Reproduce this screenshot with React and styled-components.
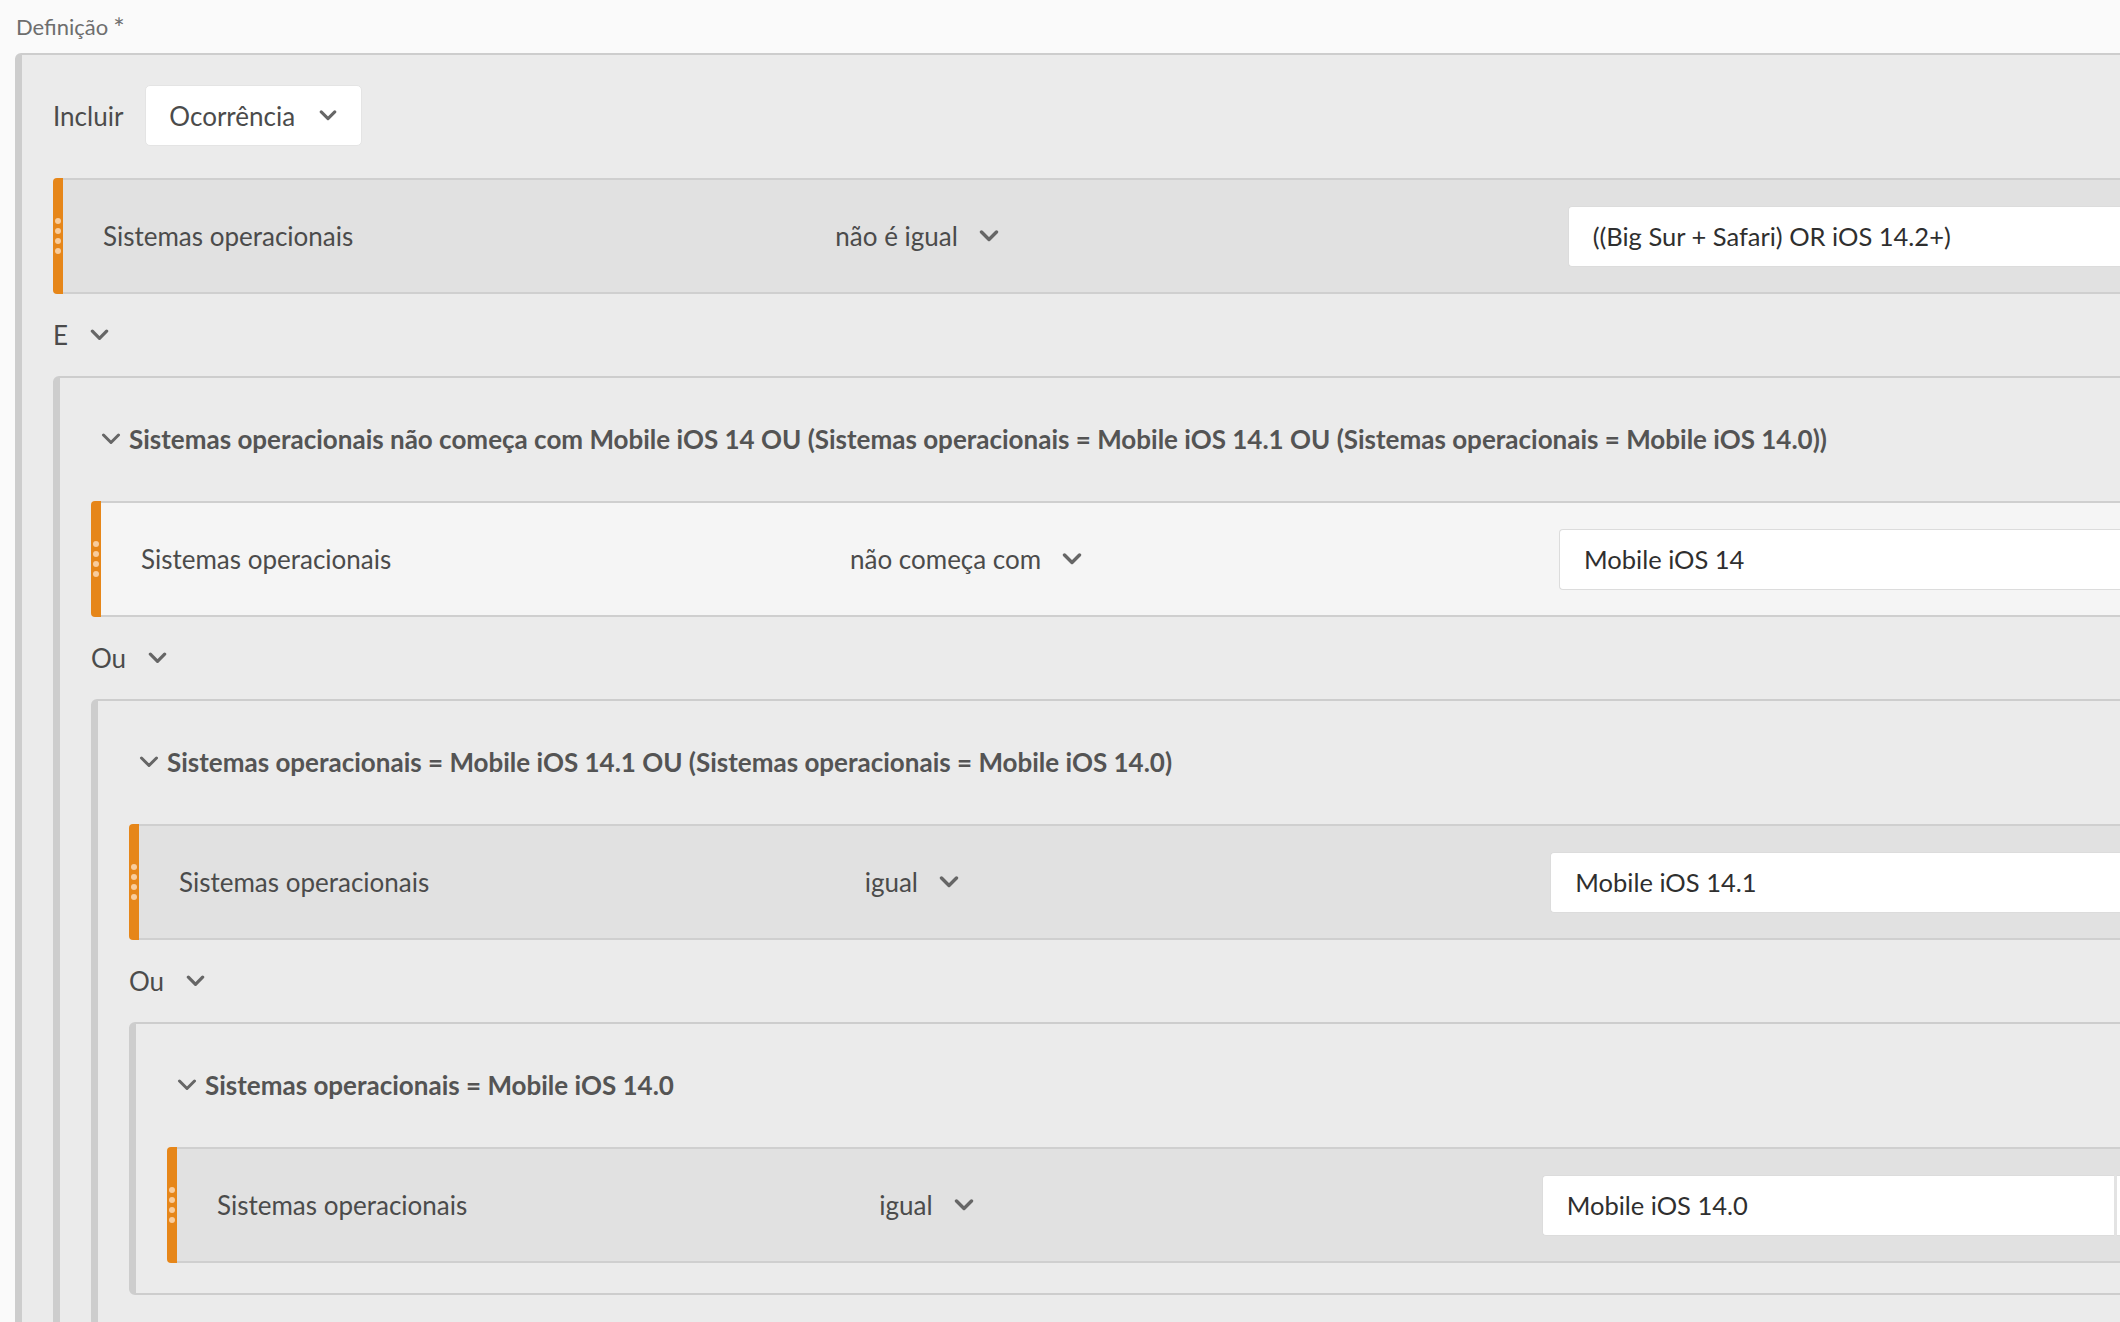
import React from "react"
import styled, { createGlobalStyle } from "styled-components"

const GlobalStyle = createGlobalStyle`
  html, body {
    margin: 0;
    overflow: hidden;
    background: #fafafa;
  }
  body {
    font-family: Lato, "Noto Sans", sans-serif;
    color: #4b4b4b;
  }
`

const Page = styled.div`
  width: max-content;
  padding: 12px 0 0 15px;
`

const FieldLabel = styled.div`
  height: 30px;
  font-size: 22px;
  line-height: 30px;
  color: #6e6e6e;
  margin: 0 0 11px 1px;
`

const Required = styled.span`
  font-size: 27px;
  line-height: 0;
  margin-left: 5px;
  vertical-align: -3px;
`

const Group = styled.div`
  box-sizing: border-box;
  width: ${p => p.$width || "auto"};
  background: #ebebeb;
  border: 2px solid #cdcdcd;
  border-left-width: 7px;
  border-radius: 6px;
  padding: 30px 30px 30px 31px;
`

const HeaderLine = styled.div`
  display: flex;
  align-items: center;
  height: 61px;
  margin-bottom: 32px;
`

const IncludeLabel = styled.span`
  font-size: 26px;
  margin-right: 22px;
`

const Dropdown = styled.div`
  box-sizing: border-box;
  display: flex;
  align-items: center;
  gap: 24px;
  height: 61px;
  padding: 0 24px 0 23px;
  background: #fff;
  border: 1px solid #e4e4e4;
  border-radius: 5px;
  font-size: 26px;
  color: #4b4b4b;
`

const GroupTitle = styled.span`
  font-size: 26px;
  font-weight: 700;
  color: #545454;
  white-space: nowrap;
  margin-left: 8px;
`

const Toggle = styled.span`
  display: flex;
  margin-left: 10px;
`

const Rule = styled.div`
  display: flex;
  height: 116px;
`

const Grip = styled.div`
  width: 10px;
  flex: none;
  background: #e68619;
  border-radius: 4px 0 0 4px;
  display: flex;
  flex-direction: column;
  align-items: center;
  justify-content: center;
  gap: 4px;
`

const Dot = styled.span`
  width: 6px;
  height: 6px;
  border-radius: 50%;
  background: #f8cc9c;
`

const RuleBody = styled.div`
  box-sizing: border-box;
  flex: 1;
  display: grid;
  grid-template-columns: 1fr 1fr 1fr 200px;
  align-items: center;
  padding-left: 40px;
  background: ${p => (p.$light ? "#f5f5f5" : "#e1e1e1")};
  border: 2px solid #cfcfcf;
  border-left: none;
  border-radius: 0 4px 4px 0;
`

const FieldName = styled.span`
  font-size: 26px;
  color: #4b4b4b;
`

const Operator = styled.div`
  display: flex;
  align-items: center;
  gap: 21px;
  font-size: 26px;
  color: #4b4b4b;
`

const Combo = styled.div`
  display: flex;
  height: 61px;
`

const ValueInput = styled.div`
  box-sizing: border-box;
  flex: 1;
  display: flex;
  align-items: center;
  padding-left: 24px;
  background: #fff;
  border: 1px solid #dcdcdc;
  border-right: none;
  border-radius: 4px 0 0 4px;
  font-size: 25.5px;
  color: #2f2f2f;
`

const ComboButton = styled.div`
  box-sizing: border-box;
  width: 90px;
  background: #fff;
  border: 1px solid #dcdcdc;
  border-left: 3px solid #e3e3e3;
  border-radius: 0 4px 4px 0;
`

const Connector = styled.div`
  display: flex;
  align-items: center;
  gap: 22px;
  height: 82px;
  font-size: 26px;
  color: #4b4b4b;
`

const ChevronSvg = styled.svg`
  display: block;
  fill: none;
  stroke: #666;
  stroke-width: ${p => p.$weight || 3.4};
  stroke-linecap: round;
  stroke-linejoin: round;
`

const Chevron = ({ width = 20, weight }) => (
  <ChevronSvg width={width} height={Math.round(width * 0.62)} viewBox="0 0 20 12" $weight={weight}>
    <polyline points="2.5,2 10,9.5 17.5,2" />
  </ChevronSvg>
)

const tree = {
  rule: { field: "Sistemas operacionais", op: "não é igual", value: "((Big Sur + Safari) OR iOS 14.2+)" },
  connector: "E",
  child: {
    title: "Sistemas operacionais não começa com Mobile iOS 14 OU (Sistemas operacionais = Mobile iOS 14.1 OU (Sistemas operacionais = Mobile iOS 14.0))",
    rule: { field: "Sistemas operacionais", op: "não começa com", value: "Mobile iOS 14", light: true },
    connector: "Ou",
    child: {
      title: "Sistemas operacionais = Mobile iOS 14.1 OU (Sistemas operacionais = Mobile iOS 14.0)",
      rule: { field: "Sistemas operacionais", op: "igual", value: "Mobile iOS 14.1" },
      connector: "Ou",
      child: {
        title: "Sistemas operacionais = Mobile iOS 14.0",
        rule: { field: "Sistemas operacionais", op: "igual", value: "Mobile iOS 14.0" }
      }
    }
  }
}

const RuleRow = ({ field, op, value, light }) => (
  <Rule>
    <Grip>
      {[0, 1, 2, 3].map(i => <Dot key={i} />)}
    </Grip>
    <RuleBody $light={light}>
      <FieldName>{field}</FieldName>
      <Operator>
        {op}
        <Chevron width={20} />
      </Operator>
      <Combo>
        <ValueInput>{value}</ValueInput>
        <ComboButton />
      </Combo>
    </RuleBody>
  </Rule>
)

const GroupBlock = ({ node, root }) => (
  <Group $width={root ? "2519px" : undefined}>
    <HeaderLine>
      {root ? (
        <>
          <IncludeLabel>Incluir</IncludeLabel>
          <Dropdown>
            Ocorrência
            <Chevron width={18} />
          </Dropdown>
        </>
      ) : (
        <>
          <Toggle><Chevron width={20} weight={3} /></Toggle>
          <GroupTitle>{node.title}</GroupTitle>
        </>
      )}
    </HeaderLine>
    <RuleRow {...node.rule} />
    {node.child && (
      <>
        <Connector>
          {node.connector}
          <Chevron width={19} />
        </Connector>
        <GroupBlock node={node.child} />
      </>
    )}
  </Group>
)

export default function App() {
  return (
    <Page>
      <GlobalStyle />
      <FieldLabel>Definição<Required>*</Required></FieldLabel>
      <GroupBlock node={tree} root />
    </Page>
  )
}
